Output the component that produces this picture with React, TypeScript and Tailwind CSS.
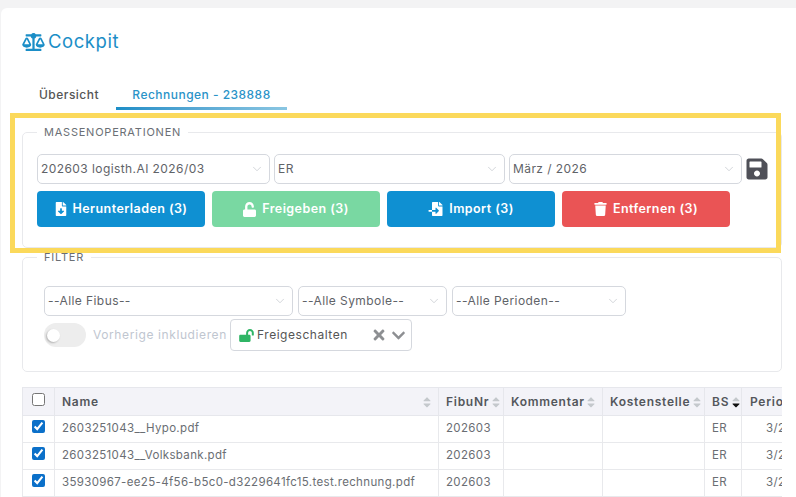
import { ChevronDown } from 'lucide-react';
import {
  FaBalanceScale,
  FaCaretDown,
  FaCaretUp,
  FaChevronDown,
  FaFileDownload,
  FaFileImport,
  FaLockOpen,
  FaSave,
  FaTimes,
  FaTrash,
  FaUnlock,
} from 'react-icons/fa';
import type { ReactNode } from 'react';

function SelectBox({ label, className }: { label: string; className: string }) {
  return (
    <div
      className={`flex h-[30px] shrink-0 items-center justify-between rounded-[5px] border border-[#d5d8de] bg-white pl-[3px] pr-[5px] text-[12px] tracking-[0.035em] text-[#5f6368] ${className}`}
    >
      <span className="truncate">{label}</span>
      <ChevronDown className="h-[14px] w-[14px] shrink-0 text-[#c3c6cc]" strokeWidth={1.25} />
    </div>
  );
}

function ActionButton({ icon, label, color }: { icon: ReactNode; label: string; color: string }) {
  return (
    <div
      className={`flex h-9 w-[168px] items-center justify-center gap-[6px] rounded-[4px] text-[12.5px] font-semibold tracking-[0.035em] text-white ${color}`}
    >
      {icon}
      <span>{label}</span>
    </div>
  );
}

function Legend({ children }: { children: string }) {
  return <legend className="px-[7px] text-[11px] leading-[13px] tracking-[0.07em] text-[#6b6f75]">{children}</legend>;
}

function SortIcon({ active }: { active?: boolean }) {
  return (
    <span className="ml-[2px] flex w-[9px] shrink-0 flex-col items-center leading-none">
      <FaCaretUp className="-mb-[6px] h-[12px] w-[12px] text-[#c4c8cc]" />
      <FaCaretDown className={`h-[12px] w-[12px] ${active ? 'text-[#111]' : 'text-[#c4c8cc]'}`} />
    </span>
  );
}

function HeaderCell({ label, active, spread }: { label: string; active?: boolean; spread?: boolean }) {
  return (
    <th className="border border-[#e6e7ec] px-[7px] text-left font-semibold">
      <div className={`flex items-center ${spread ? 'justify-between' : ''}`}>
        <span className="whitespace-nowrap">{label}</span>
        <SortIcon active={active} />
      </div>
    </th>
  );
}

const rows = [
  '2603251043__Hypo.pdf',
  '2603251043__Volksbank.pdf',
  '35930967-ee25-4f56-b5c0-d3229641fc15.test.rechnung.pdf',
];

export default function App() {
  return (
    <div className="relative h-[497px] w-[796px] overflow-hidden bg-[#f3f3f4] pl-[1px] pt-2 font-['Inter',sans-serif] text-[#5f6368]">
      <div className="h-[600px] rounded-tl-[6px] bg-white pl-[21px] pr-[14px]">
        <div className="flex h-[66px] items-center gap-[3px] pt-[1px] text-[#1b8ec7]">
          <FaBalanceScale className="h-[18px] w-[23px]" />
          <span className="text-[18.5px] font-normal tracking-[0.03em]">Cockpit</span>
        </div>

        <div className="flex h-[36px] text-[12px] tracking-[0.04em]">
          <div className="flex w-[94px] items-start justify-center pt-[12px] font-medium text-[#555]">Übersicht</div>
          <div className="flex w-[171px] flex-col items-center justify-between pt-[12px] font-medium text-[#2a93c8]">
            <span>Rechnungen - 238888</span>
            <div className="h-[3px] w-full bg-gradient-to-r from-[#1b8ec7] to-[#8ac6e2]" />
          </div>
        </div>

        <fieldset className="mt-[16px] h-[122px] rounded-[5px] border border-[#e8e9ec] pl-[14px]">
          <Legend>MASSENOPERATIONEN</Legend>
          <div className="flex items-center gap-[4px] pt-[15px]">
            <SelectBox label="202603 logisth.AI 2026/03" className="w-[233px]" />
            <SelectBox label="ER" className="w-[231px]" />
            <SelectBox label="März / 2026" className="w-[233px]" />
            <FaSave className="h-[24px] w-[22px] text-[#4f5058]" />
          </div>
          <div className="mt-[7px] flex gap-[7px]">
            <ActionButton color="bg-[#0f90d2]" icon={<FaFileDownload className="h-[14px] w-[12px]" />} label="Herunterladen (3)" />
            <ActionButton color="bg-[#79d8a2]" icon={<FaUnlock className="h-[15px] w-[13px]" />} label="Freigeben (3)" />
            <ActionButton color="bg-[#0f90d2]" icon={<FaFileImport className="h-[14px] w-[15px]" />} label="Import (3)" />
            <ActionButton color="bg-[#ea5455]" icon={<FaTrash className="h-[14px] w-[13px]" />} label="Entfernen (3)" />
          </div>
        </fieldset>

        <fieldset className="mt-[3px] h-[121px] rounded-[5px] border border-[#e8e9ec] pl-[14px]">
          <Legend>FILTER</Legend>
          <div className="pl-[7px]">
            <div className="flex gap-[5px] pt-[22px]">
              <SelectBox label="--Alle Fibus--" className="w-[249px]" />
              <SelectBox label="--Alle Symbole--" className="w-[149px]" />
              <SelectBox label="--Alle Perioden--" className="w-[174px]" />
            </div>
            <div className="mt-[3px] flex items-center">
              <div className="flex h-[24px] w-[42px] items-center rounded-full bg-[#ededed] pl-[3px]">
                <div className="h-[13px] w-[13px] rounded-full bg-white shadow-[-1px_1px_2px_rgba(0,0,0,0.25)]" />
              </div>
              <span className="ml-[7px] w-[137px] whitespace-nowrap text-[12px] tracking-[0.05em] text-[#c0c6d0]">Vorherige inkludieren</span>
              <div className="flex h-[32px] w-[182px] items-center rounded-[4px] border border-[#d5d8de] pl-[8px] pr-[5px] text-[12px] tracking-[0.045em] text-[#555]">
                <FaLockOpen className="h-[13px] w-[15px] text-[#2fb565]" />
                <span className="ml-[3px] flex-1">Freigeschalten</span>
                <FaTimes className="mr-[6px] h-[16px] w-[12px] text-[#8d8f92]" />
                <FaChevronDown className="h-[15px] w-[15px] text-[#8d8f92]" />
              </div>
            </div>
          </div>
        </fieldset>

        <div className="mt-[15px] w-[760px] overflow-hidden">
          <table className="w-[790px] table-fixed border-collapse text-[11.5px] tracking-[0.03em]">
            <colgroup>
              <col className="w-[32px]" />
              <col className="w-[384px]" />
              <col className="w-[65px]" />
              <col className="w-[99px]" />
              <col className="w-[102px]" />
              <col className="w-[37px]" />
              <col className="w-[71px]" />
            </colgroup>
            <thead className="bg-[#f3f3f8] text-[12px] tracking-[0.06em] text-[#54575c]">
              <tr className="h-[28px]">
                <th className="border border-[#e6e7ec] text-center">
                  <input type="checkbox" readOnly className="mb-[4px] h-[13px] w-[13px]" />
                </th>
                <HeaderCell label="Name" spread />
                <HeaderCell label="FibuNr" />
                <HeaderCell label="Kommentar" />
                <HeaderCell label="Kostenstelle" />
                <HeaderCell label="BS" active />
                <th className="border border-[#e6e7ec] px-[8px] text-left font-semibold">Periode</th>
              </tr>
            </thead>
            <tbody className="text-[#6a6e73]">
              {rows.map((name) => (
                <tr key={name} className="h-[27px]">
                  <td className="border border-[#e8e9ec] text-center">
                    <input type="checkbox" checked readOnly className="mb-[4px] h-[13px] w-[13px] accent-[#0b70c9]" />
                  </td>
                  <td className="border border-[#e8e9ec] px-[7px]">{name}</td>
                  <td className="border border-[#e8e9ec] px-[7px]">202603</td>
                  <td className="border border-[#e8e9ec]" />
                  <td className="border border-[#e8e9ec]" />
                  <td className="border border-[#e8e9ec] px-[7px]">ER</td>
                  <td className="border border-[#e8e9ec] pl-[24px]">3/2026</td>
                </tr>
              ))}
            </tbody>
          </table>
        </div>
      </div>

      {/* highlight drawn on top of the bulk operations panel */}
      <div className="pointer-events-none absolute left-[10px] top-[113px] h-[140px] w-[771px] border-[5px] border-[#fbd95b]" />
    </div>
  );
}
